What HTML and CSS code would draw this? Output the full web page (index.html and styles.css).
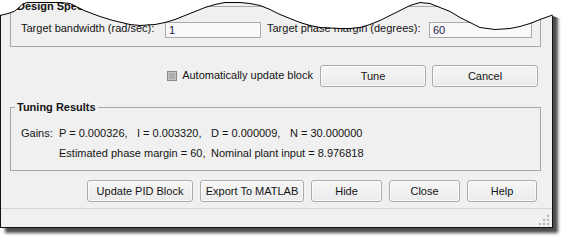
FILE: index.html
```html
<!DOCTYPE html>
<html lang="en">
<head>
    <meta charset="UTF-8">
    <title>PID Tuning</title>
    <link rel="stylesheet" href="styles.css">
</head>
<body>
    <div class="page">
        <div class="dialog">
            <fieldset class="group specs">
                <legend>Design Specifications</legend>
                <div class="spec-row">
                    <label class="spec-label bw-label" for="bandwidth">Target bandwidth (rad/sec):</label>
                    <input class="field bw-field" id="bandwidth" type="text" value="1">
                    <label class="spec-label pm-label" for="phase">Target phase margin (degrees):</label>
                    <input class="field pm-field" id="phase" type="text" value="60">
                </div>
            </fieldset>

            <div class="action-row">
                <span class="check"></span>
                <span class="check-label">Automatically update block</span>
                <button class="btn wide">Tune</button>
                <button class="btn wide">Cancel</button>
            </div>

            <fieldset class="group results">
                <legend>Tuning Results</legend>
                <div class="gains">
                    <span>Gains:</span>
                    <span>P = 0.000326,</span>
                    <span>I = 0.003320,</span>
                    <span>D = 0.000009,</span>
                    <span>N = 30.000000</span>
                    <span class="est">Estimated phase margin = 60,</span>
                    <span class="nominal">Nominal plant input = 8.976818</span>
                </div>
            </fieldset>

            <div class="button-row">
                <button class="btn update">Update PID Block</button>
                <button class="btn export">Export To MATLAB</button>
                <button class="btn small">Hide</button>
                <button class="btn small">Close</button>
                <button class="btn help">Help</button>
            </div>

            <div class="status-bar">
                <svg class="grip" width="10" height="10" viewBox="0 0 10 10">
                    <rect x="8" y="0" width="2" height="2" fill="#b4b4b4"/>
                    <rect x="4" y="4" width="2" height="2" fill="#b4b4b4"/>
                    <rect x="8" y="4" width="2" height="2" fill="#b4b4b4"/>
                    <rect x="0" y="8" width="2" height="2" fill="#b4b4b4"/>
                    <rect x="4" y="8" width="2" height="2" fill="#b4b4b4"/>
                    <rect x="8" y="8" width="2" height="2" fill="#b4b4b4"/>
                </svg>
            </div>
        </div>

        <!-- torn top edge of the excerpt -->
        <svg class="tear" width="567" height="34" viewBox="0 0 567 34">
            <path fill="#fff" d="M0 0 H567 V21 L553 16 L552 15 L540 19 L530 23 L520 26 L510 28 L495 29 L480 27 L470 22 L460 17 L450 11 L440 7 L430 3 L420 2 L410 5 L400 10 L390 15 L380 20 L370 24 L360 27 L350 28 L340 28 L320 27 L310 25 L300 22 L290 18 L280 14 L270 9 L260 5 L250 3 L240 2 L225 2 L215 4 L205 7 L195 11 L185 15 L175 19 L165 22 L155 24 L140 25 L130 24 L113 20 L100 16 L92 13 L84 10 L76 6 L70 3 L60 2 L27 2 L22 4 L18 8 L14 11 L8 13 L0 15 Z"/>
            <polyline fill="none" stroke="#000" stroke-width="1" stroke-linejoin="round" points="0,15.5 8,13.5 14,11.5 18,8.5 22,4.5 27,2.5 60,2.5 70,3.5 76,6.5 84,10.5 92,13.5 100,16.5 113,20.5 130,24.5 140,25.5 155,24.5 165,22.5 175,19.5 185,15.5 195,11.5 205,7.5 215,4.5 225,2.5 240,2.5 250,3.5 260,5.5 270,9.5 280,14.5 290,18.5 300,22.5 310,25.5 320,27.5 340,28.5 350,28.5 360,27.5 370,24.5 380,20.5 390,15.5 400,10.5 410,5.5 420,2.5 430,3.5 440,7.5 450,11.5 460,17.5 470,22.5 480,27.5 495,29.5 510,28.5 520,26.5 530,23.5 540,19.5 552.5,15"/>
        </svg>
    </div>
</body>
</html>
```

FILE: styles.css
```css
body {
    margin: 0;
    background-color: #fff;
    font-family: "Liberation Sans", Arial, sans-serif;
    font-size: 11px;
    color: #141414;
}
.page {
    position: relative;
    width: 567px;
    height: 243px;
}
.dialog {
    box-sizing: border-box;
    width: 553px;
    height: 228px;
    background-color: #f0f0f0;
    border: 1px solid #111;
    border-top: 0;
    box-shadow: 5px 5px 3px rgba(0, 0, 0, 0.7);
    display: flex;
    flex-direction: column;
}
.group {
    box-sizing: border-box;
    width: 531px;
    margin: 0 0 0 9px;
    border: 1px solid #a8a8a8;
    min-inline-size: auto;
}
.group legend {
    font-weight: bold;
    line-height: 13px;
    padding: 0 2px;
    margin-left: -6px;
}
.specs {
    padding: 9px 10px 8px;
}
.spec-row {
    display: flex;
    align-items: flex-start;
    height: 16px;
}
.spec-label {
    flex: none;
    line-height: 13px;
}
.bw-label {
    width: 144px;
}
.pm-label {
    width: 162px;
    margin-left: 6px;
}
.field {
    flex: none;
    box-sizing: border-box;
    height: 16px;
    margin: 0;
    padding: 0 3px;
    border: 1px solid #a9a9a9;
    background-color: #f9f9f9;
    font: inherit;
    color: #1a1a50;
}
.bw-field {
    width: 96px;
}
.pm-field {
    width: 103px;
}
.action-row {
    display: flex;
    justify-content: flex-end;
    align-items: center;
    height: 22px;
    margin-top: 18px;
    padding-right: 14px;
}
.check {
    box-sizing: border-box;
    width: 10px;
    height: 10px;
    border: 1px solid #8a8a8a;
    background-color: #adadad;
    box-shadow: inset 0 0 0 1px #c6c6c6;
    margin-right: 5px;
}
.check-label {
    line-height: 13px;
    margin: 0 7px 1px 0;
}
.btn {
    box-sizing: border-box;
    height: 22px;
    margin: 0;
    padding: 0;
    border: 1px solid #ababab;
    border-radius: 3px;
    background: linear-gradient(#f6f6f6, #ebebeb);
    box-shadow: inset 0 0 0 1px #fbfbfb;
    font: inherit;
    color: #141414;
}
.wide {
    width: 106px;
}
.action-row .wide + .wide {
    margin-left: 6px;
}
.results {
    margin-top: 14px;
    padding: 9px 10px 7px;
}
.gains {
    display: grid;
    grid-template-columns: 38px 78px 74px 79px auto;
    line-height: 20px;
}
.est {
    grid-column: 2 / span 2;
}
.nominal {
    grid-column: 4 / span 2;
}
.button-row {
    display: flex;
    justify-content: flex-end;
    gap: 7px;
    margin-top: 9px;
    padding-right: 15px;
}
.update {
    width: 106px;
}
.export {
    width: 104px;
}
.small {
    width: 71px;
}
.help {
    width: 70px;
}
.status-bar {
    flex: 1;
    display: flex;
    justify-content: flex-end;
    align-items: flex-end;
    margin-top: 6px;
    border-top: 1px solid #cdd6de;
    padding: 0 3px 2px 0;
}
.tear {
    position: absolute;
    top: 0;
    left: 0;
    pointer-events: none;
}
```
